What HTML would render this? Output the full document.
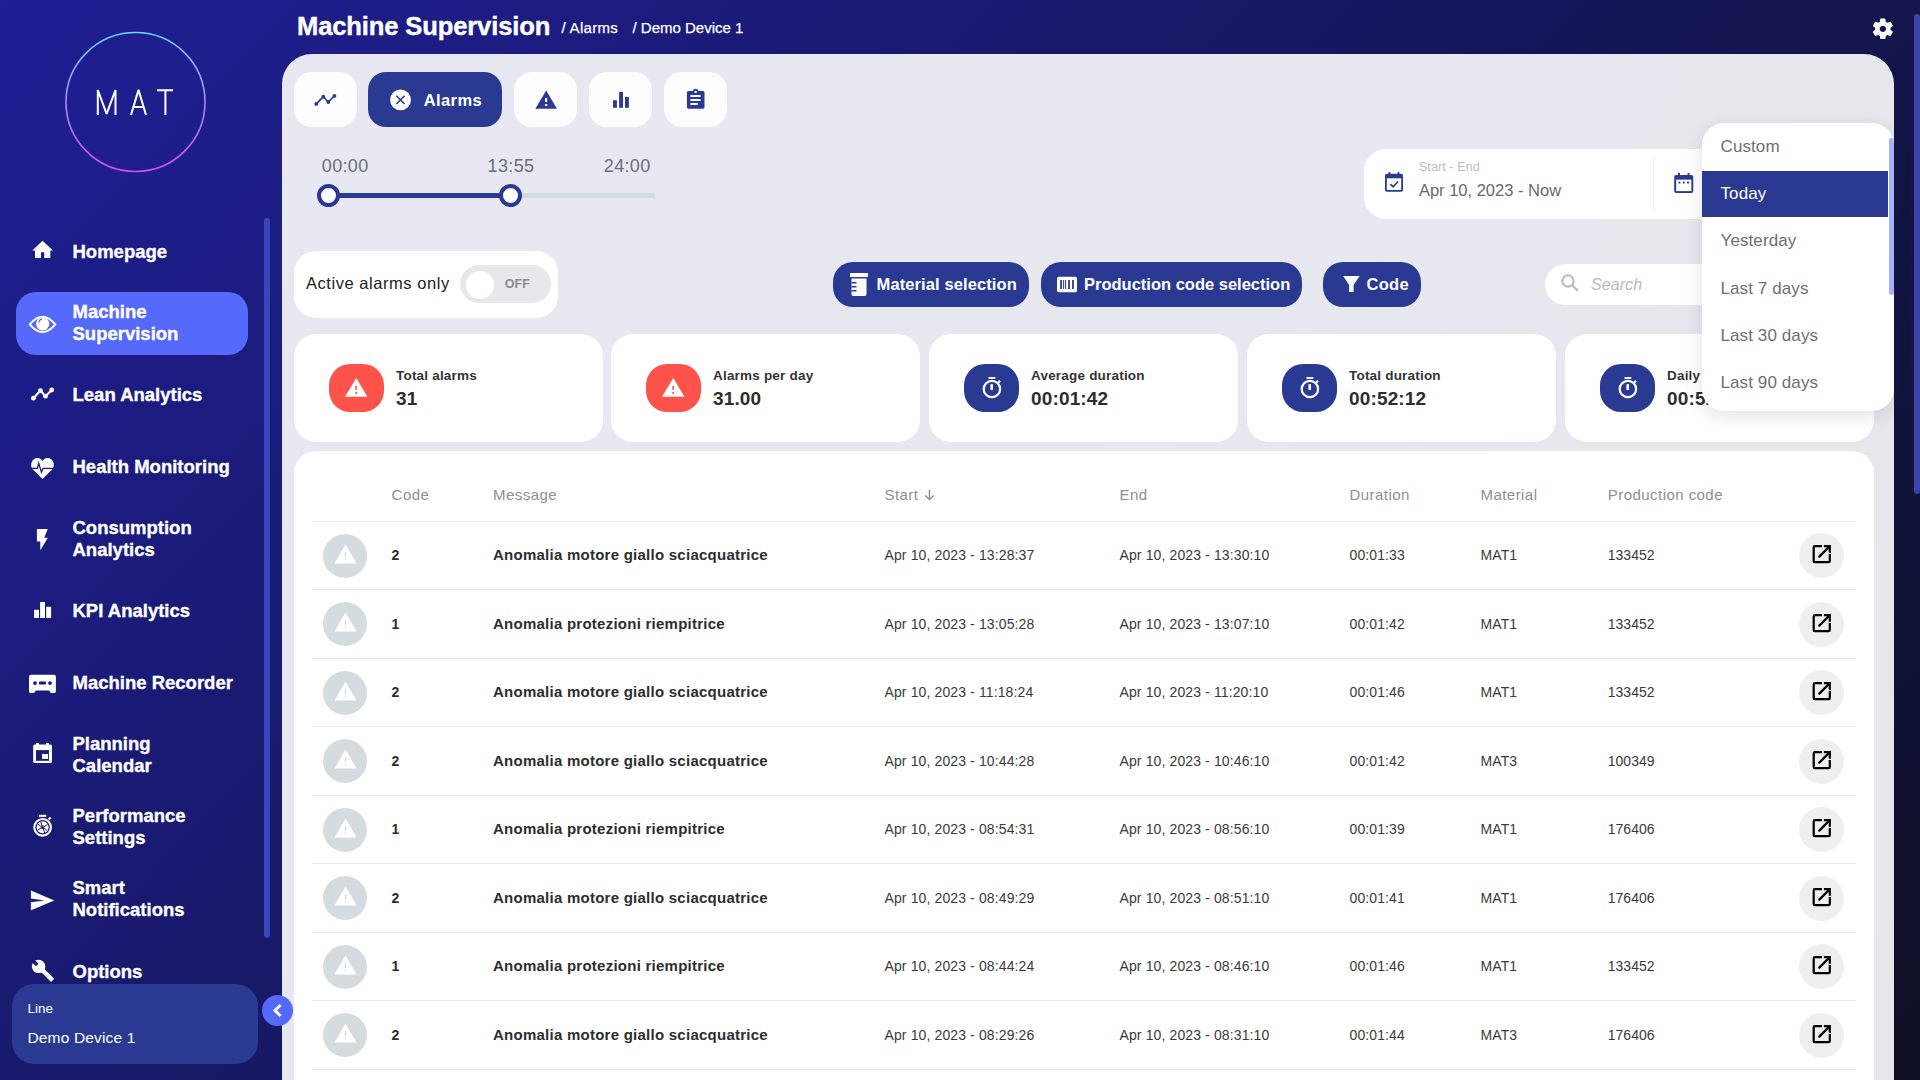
<!DOCTYPE html>
<html><head><meta charset="utf-8"><title>Machine Supervision</title>
<style>
html,body{margin:0;padding:0;width:1920px;height:1080px;overflow:hidden}
body{position:relative;font-family:"Liberation Sans", sans-serif;background:linear-gradient(134deg,#1f1f96 0%,#0d0f23 100%)}
.abs{position:absolute}
.t{position:absolute;white-space:nowrap}
svg{display:block}
</style></head><body>
<svg class="abs" style="left:60px;top:27px" width="152" height="152" viewBox="0 0 152 152">
<defs><linearGradient id="lg" x1="0" y1="0" x2="0" y2="1"><stop offset="0" stop-color="#6fd6ff"/><stop offset="0.5" stop-color="#a78bf5"/><stop offset="1" stop-color="#d94af0"/></linearGradient></defs>
<circle cx="75.5" cy="75" r="69.5" fill="none" stroke="url(#lg)" stroke-width="1.6"/>
<g fill="none" stroke="#fff" stroke-width="2" stroke-linejoin="bevel">
<path d="M37.8 88 V63 L46.6 86.8 L55.5 63 V88"/>
<path d="M71 88 L78.5 62.9 L86 88 M73.2 79.9 H83.6"/>
<path d="M97.1 63.3 H113.1 M105.4 63.3 V88"/>
</g></svg>
<div class="abs" style="left:264px;top:218px;width:6px;height:720px;border-radius:3px;background:#3845bb"></div>
<div class="abs" style="left:16px;top:292px;width:232px;height:63px;border-radius:20px;background:#5569fb"></div>
<div class="t" style="left:72.5px;top:242.74px;font-size:18.5px;line-height:18.5px;font-weight:700;color:#fff;letter-spacing:0px;-webkit-text-stroke:0.35px #fff;">Homepage</div>
<div class="t" style="left:72.5px;top:303.34px;font-size:18.5px;line-height:18.5px;font-weight:700;color:#fff;letter-spacing:0px;-webkit-text-stroke:0.35px #fff;">Machine</div><div class="t" style="left:72.5px;top:325.34px;font-size:18.5px;line-height:18.5px;font-weight:700;color:#fff;letter-spacing:0px;-webkit-text-stroke:0.35px #fff;">Supervision</div>
<div class="t" style="left:72.5px;top:386.34px;font-size:18.5px;line-height:18.5px;font-weight:700;color:#fff;letter-spacing:0px;-webkit-text-stroke:0.35px #fff;">Lean Analytics</div>
<div class="t" style="left:72.5px;top:458.34px;font-size:18.5px;line-height:18.5px;font-weight:700;color:#fff;letter-spacing:0px;-webkit-text-stroke:0.35px #fff;">Health Monitoring</div>
<div class="t" style="left:72.5px;top:519.34px;font-size:18.5px;line-height:18.5px;font-weight:700;color:#fff;letter-spacing:0px;-webkit-text-stroke:0.35px #fff;">Consumption</div><div class="t" style="left:72.5px;top:541.34px;font-size:18.5px;line-height:18.5px;font-weight:700;color:#fff;letter-spacing:0px;-webkit-text-stroke:0.35px #fff;">Analytics</div>
<div class="t" style="left:72.5px;top:602.34px;font-size:18.5px;line-height:18.5px;font-weight:700;color:#fff;letter-spacing:0px;-webkit-text-stroke:0.35px #fff;">KPI Analytics</div>
<div class="t" style="left:72.5px;top:674.34px;font-size:18.5px;line-height:18.5px;font-weight:700;color:#fff;letter-spacing:0px;-webkit-text-stroke:0.35px #fff;">Machine Recorder</div>
<div class="t" style="left:72.5px;top:735.34px;font-size:18.5px;line-height:18.5px;font-weight:700;color:#fff;letter-spacing:0px;-webkit-text-stroke:0.35px #fff;">Planning</div><div class="t" style="left:72.5px;top:757.34px;font-size:18.5px;line-height:18.5px;font-weight:700;color:#fff;letter-spacing:0px;-webkit-text-stroke:0.35px #fff;">Calendar</div>
<div class="t" style="left:72.5px;top:807.34px;font-size:18.5px;line-height:18.5px;font-weight:700;color:#fff;letter-spacing:0px;-webkit-text-stroke:0.35px #fff;">Performance</div><div class="t" style="left:72.5px;top:829.34px;font-size:18.5px;line-height:18.5px;font-weight:700;color:#fff;letter-spacing:0px;-webkit-text-stroke:0.35px #fff;">Settings</div>
<div class="t" style="left:72.5px;top:879.34px;font-size:18.5px;line-height:18.5px;font-weight:700;color:#fff;letter-spacing:0px;-webkit-text-stroke:0.35px #fff;">Smart</div><div class="t" style="left:72.5px;top:901.34px;font-size:18.5px;line-height:18.5px;font-weight:700;color:#fff;letter-spacing:0px;-webkit-text-stroke:0.35px #fff;">Notifications</div>
<div class="t" style="left:72.5px;top:962.94px;font-size:18.5px;line-height:18.5px;font-weight:700;color:#fff;letter-spacing:0px;-webkit-text-stroke:0.35px #fff;">Options</div>
<svg class="abs" style="left:0;top:0" width="282" height="1080" viewBox="0 0 282 1080">
<defs><mask id="cut" maskUnits="userSpaceOnUse" x="0" y="0" width="282" height="1080">
<rect x="0" y="0" width="282" height="1080" fill="#fff"/>
<path fill="none" stroke="#000" stroke-width="1.3" d="M30 468.4 H37.4 L38.7 463.2 L41.4 472.2 L43.1 468.4 H55"/>
<g fill="#000"><circle cx="35" cy="683.1" r="1.9"/><rect x="39" y="681.6" width="6.9" height="3" rx="0.6"/><circle cx="50" cy="683.1" r="1.9"/></g>
<rect x="36" y="750.1" width="12.9" height="10.7" fill="#000"/>
<g stroke="#000" stroke-width="1" fill="none"><path d="M40.6 821.6 L43.2 829"/><path d="M47.6 824.3 L41.2 828.9"/><path d="M47.3 830.8 L41.4 825.6"/><path d="M44.8 833 L42.2 825.6"/><path d="M37.6 830.3 L44 825.7"/><path d="M37.8 823.8 L43.8 829"/></g>
<path d="M31 958.8 L37.3 965.1" stroke="#000" stroke-width="3.6"/>
</mask></defs>
<path fill="#fff" d="M32.3 250.4 L42.5 240.7 L53 250.4 H50.3 V258.1 H44.2 V252.2 H41 V258.1 H35 V250.4 Z"/>
<path fill="none" stroke="#fff" stroke-width="2" d="M29.8 324.4 Q42.5 309 55.3 324.4 Q42.5 339.8 29.8 324.4 Z"/>
<circle cx="42.7" cy="323.8" r="6.6" fill="#fff"/>
<path fill="none" stroke="#5569fb" stroke-width="1.2" d="M38.8 322.6 Q39.3 319.6 42 318.9"/>
<g fill="#fff"><circle cx="33.4" cy="398.2" r="2.4"/><circle cx="40.4" cy="390.6" r="2.4"/><circle cx="45.5" cy="396.2" r="2.4"/><circle cx="51.7" cy="390" r="2.4"/></g>
<path fill="none" stroke="#fff" stroke-width="2" d="M33.4 398.2 L40.4 390.6 L45.5 396.2 L51.7 390"/>
<g mask="url(#cut)">
<path fill="#fff" d="M42.5 478.9 L33.2 469.8 C30.3 466.9 30.6 461.8 33.6 459.4 C36.6 457 40.6 457.6 42.5 460.9 C44.4 457.6 48.4 457 51.4 459.4 C54.4 461.8 54.7 466.9 51.8 469.8 Z"/>
<path fill="#fff" d="M31 674.8 H54 Q55.9 674.8 55.9 676.7 V691.2 Q55.9 693.1 54 693.1 H51.6 Q50.6 693.1 50.1 692 L49.3 690.5 H35.7 L34.9 692 Q34.4 693.1 33.4 693.1 H31 Q29 693.1 29 691.2 V676.7 Q29 674.8 31 674.8 Z"/>
<g fill="#fff"><rect x="33.2" y="744.6" width="18.8" height="18.5" rx="1.6"/><rect x="36" y="743" width="3" height="3" rx="0.8"/><rect x="45.9" y="743" width="3" height="3" rx="0.8"/></g>
<circle cx="42.6" cy="827.3" r="6" fill="#fff"/>
<circle cx="38.6" cy="966.4" r="6.7" fill="#fff"/>
</g>
<path fill="#fff" d="M36.9 528.9 H47.8 L44.2 537.8 H47.9 L40.3 550.2 V541.6 H36.9 Z"/>
<g fill="#fff"><rect x="34.1" y="609.8" width="4.9" height="8.2"/><rect x="40.1" y="602" width="4.9" height="16"/><rect x="46.2" y="606.8" width="4.9" height="11.2"/></g>
<rect x="42" y="754" width="6" height="4.9" fill="#fff"/>
<circle cx="42.6" cy="827.3" r="8.3" fill="none" stroke="#fff" stroke-width="2.1"/>
<rect x="39" y="814.8" width="7.2" height="2.1" fill="#fff"/>
<path d="M48.7 819.5 L50.6 817.6" stroke="#fff" stroke-width="2.2"/>
<path fill="#fff" d="M30.9 890.5 L54.3 900.4 L30.9 910.2 V902.3 L44.5 900.4 L30.9 898.5 Z"/>
<path d="M40 967.8 L52.6 980.4" stroke="#fff" stroke-width="4.4"/>
</svg>
<div class="abs" style="left:12px;top:984px;width:246px;height:80px;border-radius:22px;background:#2a3a92"></div>
<div class="t" style="left:27.5px;top:1002.07px;font-size:13.5px;line-height:13.5px;font-weight:400;color:#fff;letter-spacing:0px;">Line</div>
<div class="t" style="left:27.5px;top:1029.88px;font-size:15.5px;line-height:15.5px;font-weight:400;color:#fff;letter-spacing:0.15px;">Demo Device 1</div>
<div class="t" style="left:297px;top:13.93px;font-size:25.6px;line-height:25.6px;font-weight:700;color:#fff;letter-spacing:-0.15px;-webkit-text-stroke:0.4px #fff;">Machine Supervision</div>
<div class="t" style="left:561.5px;top:20.30px;font-size:15px;line-height:15px;font-weight:400;color:#fff;letter-spacing:0.3px;-webkit-text-stroke:0.25px #fff;">/ Alarms</div>
<div class="t" style="left:632.5px;top:20.30px;font-size:15px;line-height:15px;font-weight:400;color:#fff;letter-spacing:0px;-webkit-text-stroke:0.25px #fff;">/ Demo Device 1</div>
<svg class="abs" style="left:1869.5px;top:15.9px" width="25.7" height="25.7" viewBox="0 0 24 24"><path fill="#fff" d="M19.14 12.94c.04-.3.06-.61.06-.94 0-.32-.02-.64-.07-.94l2.03-1.58a.49.49 0 0 0 .12-.61l-1.92-3.32a.488.488 0 0 0-.59-.22l-2.39.96c-.5-.38-1.03-.7-1.62-.94l-.36-2.54a.484.484 0 0 0-.48-.41h-3.84c-.24 0-.43.17-.47.41l-.36 2.54c-.59.24-1.13.57-1.62.94l-2.39-.96c-.22-.08-.47 0-.59.22L2.74 8.87c-.12.21-.08.47.12.61l2.03 1.58c-.05.3-.09.63-.09.94s.02.64.07.94l-2.03 1.58a.49.49 0 0 0-.12.61l1.92 3.32c.12.22.37.29.59.22l2.39-.96c.5.38 1.03.7 1.62.94l.36 2.54c.05.24.24.41.48.41h3.84c.24 0 .44-.17.47-.41l.36-2.54c.59-.24 1.13-.56 1.62-.94l2.39.96c.22.08.47 0 .59-.22l1.92-3.32c.12-.22.07-.47-.12-.61l-2.01-1.58zM12 15c-1.65 0-3-1.35-3-3s1.35-3 3-3 3 1.35 3 3-1.35 3-3 3z"/></svg>
<div class="abs" style="left:1914px;top:14px;width:6px;height:480px;border-radius:3px;background:#3a44a8"></div>
<div class="abs" style="left:282px;top:54px;width:1612px;height:1100px;border-radius:30px 30px 0 0;background:linear-gradient(115deg,#e8e8f2 0%,#e8e8f1 45%,#e5e7ea 100%)"></div>
<div class="abs" style="left:262px;top:995px;width:31px;height:31px;border-radius:50%;background:#5569fb"><svg width="31" height="31" viewBox="0 0 31 31"><path d="M18.6 10 L13 15.5 L18.6 21" stroke="#fff" stroke-width="2.9" fill="none"/></svg></div>
<div class="abs" style="left:294px;top:72px;width:63px;height:55px;border-radius:18px;background:#fdfdfe"></div>
<div class="abs" style="left:368px;top:72px;width:134px;height:55px;border-radius:18px;background:#2a3a93"></div>
<div class="abs" style="left:514px;top:72px;width:63px;height:55px;border-radius:18px;background:#fdfdfe"></div>
<div class="abs" style="left:589px;top:72px;width:63px;height:55px;border-radius:18px;background:#fdfdfe"></div>
<div class="abs" style="left:664px;top:72px;width:63px;height:55px;border-radius:18px;background:#fdfdfe"></div>
<svg class="abs" style="left:280px;top:60px" width="460" height="70" viewBox="280 60 460 70">
<g fill="#2a3a93"><circle cx="316.3" cy="103.9" r="1.9"/><circle cx="323.3" cy="96.7" r="1.9"/><circle cx="328.3" cy="102" r="1.9"/><circle cx="334.4" cy="95.9" r="1.9"/></g>
<path d="M316.3 103.9 L323.3 96.7 L328.3 102 L334.4 95.9" stroke="#2a3a93" stroke-width="1.6" fill="none"/>
<circle cx="400.5" cy="99.9" r="10.4" fill="#fff"/>
<path d="M396.4 95.8 L404.6 104 M404.6 95.8 L396.4 104" stroke="#2a3a93" stroke-width="1.6"/>
<path fill="#2a3a93" d="M546.2 90.6 L557 108.7 H535.3 Z"/>
<rect x="545.1" y="98" width="2.1" height="3.9" fill="#fff"/><rect x="545.1" y="104" width="2.1" height="2" fill="#fff"/>
<g fill="#2a3a93"><rect x="613" y="100.2" width="3.9" height="7.6"/><rect x="619.1" y="92" width="3.9" height="15.8"/><rect x="625" y="97" width="3.9" height="10.8"/></g>
<path fill="#2a3a93" d="M688.5 90.9 H692.8 A2.9 2.9 0 0 1 698.4 90.9 H702.9 A1.6 1.6 0 0 1 704.5 92.5 V107.1 A1.6 1.6 0 0 1 702.9 108.7 H688.5 A1.6 1.6 0 0 1 686.9 107.1 V92.5 A1.6 1.6 0 0 1 688.5 90.9 Z"/>
<circle cx="695.6" cy="91.9" r="1.2" fill="#fff"/>
<g stroke="#fff" stroke-width="2" stroke-linecap="round"><path d="M691.2 95.9 H699.9"/><path d="M691.2 100 H699.9"/><path d="M691.2 104.1 H697"/></g>
</svg>
<div class="t" style="left:423.7px;top:91.53px;font-size:16.5px;line-height:16.5px;font-weight:700;color:#fff;letter-spacing:0.4px;">Alarms</div>
<div class="t" style="left:321.8px;top:157.46px;font-size:18px;line-height:18px;font-weight:400;color:#6b6f7b;letter-spacing:0.35px;">00:00</div>
<div class="t" style="left:487.6px;top:157.46px;font-size:18px;line-height:18px;font-weight:400;color:#6b6f7b;letter-spacing:0.35px;">13:55</div>
<div class="t" style="left:603.8px;top:157.46px;font-size:18px;line-height:18px;font-weight:400;color:#6b6f7b;letter-spacing:0.35px;">24:00</div>
<div class="abs" style="left:328px;top:192.8px;width:327px;height:5px;border-radius:3px;background:#d5dadc"></div>
<div class="abs" style="left:328px;top:192.8px;width:183px;height:5px;background:#2a3a93"></div>
<div class="abs" style="left:316.8px;top:184px;width:15px;height:15px;border:4.2px solid #2a3a93;border-radius:50%;background:#fff"></div>
<div class="abs" style="left:499.4px;top:184px;width:15px;height:15px;border:4.2px solid #2a3a93;border-radius:50%;background:#fff"></div>
<div class="abs" style="left:1363.5px;top:149px;width:520px;height:69.5px;border-radius:22px;background:#fff"></div>
<svg class="abs" style="left:1385px;top:172px" width="18" height="19.8" viewBox="0 0 20 22"><path fill="#2b3990" d="M4 0 H6 V2 H14 V0 H16 V2 H18 A2 2 0 0 1 20 4 V20 A2 2 0 0 1 18 22 H2 A2 2 0 0 1 0 20 V4 A2 2 0 0 1 2 2 H4Z"/><rect x="2" y="7" width="16" height="13" fill="#fff"/><path d="M6 13.5 L9 16.5 L14.5 10.5" stroke="#2b3990" stroke-width="1.8" fill="none"/></svg>
<div class="t" style="left:1418.9px;top:160.62px;font-size:12.5px;line-height:12.5px;font-weight:400;color:#b8bdc5;letter-spacing:0.1px;">Start - End</div>
<div class="t" style="left:1418.9px;top:182.03px;font-size:16.5px;line-height:16.5px;font-weight:400;color:#666a72;letter-spacing:0px;">Apr 10, 2023 - Now</div>
<div class="abs" style="left:1652.5px;top:157.5px;width:1px;height:53px;background:#eeeeee"></div>
<svg class="abs" style="left:1674px;top:172.5px" width="19.5" height="20" viewBox="0 0 20 21"><path fill="#2b3990" d="M4 0 H6 V2 H14 V0 H16 V2 H18 A2 2 0 0 1 20 4 V19 A2 2 0 0 1 18 21 H2 A2 2 0 0 1 0 19 V4 A2 2 0 0 1 2 2 H4Z"/><rect x="2" y="7" width="16" height="12" fill="#fff"/><g fill="#2b3990"><rect x="4.5" y="9" width="2" height="2"/><rect x="9" y="9" width="2" height="2"/><rect x="13.5" y="9" width="2" height="2"/></g></svg>
<div class="abs" style="left:294px;top:251px;width:264px;height:67px;border-radius:22px;background:#fff"></div>
<div class="t" style="left:306px;top:275.03px;font-size:16.5px;line-height:16.5px;font-weight:400;color:#222;letter-spacing:0.55px;">Active alarms only</div>
<div class="abs" style="left:460px;top:265.4px;width:91px;height:38px;border-radius:19px;background:#e6e9ea"></div>
<div class="abs" style="left:466px;top:270.5px;width:28px;height:28px;border-radius:50%;background:#fff"></div>
<div class="t" style="left:504.8px;top:278.42px;font-size:12.5px;line-height:12.5px;font-weight:700;color:#8a8d90;letter-spacing:0px;">OFF</div>
<div class="abs" style="left:833px;top:262px;width:196px;height:45px;border-radius:20px;background:#2a3a93"></div>
<div class="abs" style="left:1041px;top:262px;width:261px;height:45px;border-radius:20px;background:#2a3a93"></div>
<div class="abs" style="left:1323px;top:262px;width:98px;height:45px;border-radius:20px;background:#2a3a93"></div>
<svg class="abs" style="left:850px;top:273px" width="18" height="23" viewBox="0 0 18 23"><g fill="#fff"><rect x="0" y="0" width="18" height="4" rx="0.5"/><path d="M1.5 5.5 H16.5 V21 A2 2 0 0 1 14.5 23 H3.5 A2 2 0 0 1 1.5 21 Z"/></g><g fill="#2b3990"><rect x="1.5" y="9" width="5" height="1.5"/><rect x="1.5" y="13" width="5" height="1.5"/><rect x="1.5" y="17" width="5" height="1.5"/></g></svg>
<div class="t" style="left:876.6px;top:276.23px;font-size:16.5px;line-height:16.5px;font-weight:600;color:#fff;letter-spacing:0.1px;">Material selection</div>
<svg class="abs" style="left:1050px;top:270px" width="35" height="30" viewBox="1050 270 35 30"><rect x="1057" y="276.7" width="20" height="15.5" rx="1.8" fill="#fff"/><g fill="#2a3a93"><rect x="1060.2" y="280" width="1.8" height="9"/><rect x="1063.1" y="280" width="1" height="9"/><rect x="1065.1" y="280" width="1" height="9"/><rect x="1068.1" y="280" width="1.8" height="9"/><rect x="1072.1" y="280" width="1.8" height="9"/></g></svg>
<div class="t" style="left:1084px;top:276.23px;font-size:16.5px;line-height:16.5px;font-weight:600;color:#fff;letter-spacing:0px;">Production code selection</div>
<svg class="abs" style="left:1342.5px;top:276px" width="17" height="16.5" viewBox="0 0 17 16.5"><path fill="#fff" d="M0.2 0 H16.7 L10.6 9 V16 H6.1 V9 Z"/></svg>
<div class="t" style="left:1366.5px;top:276.23px;font-size:16.5px;line-height:16.5px;font-weight:600;color:#fff;letter-spacing:0.3px;">Code</div>
<div class="abs" style="left:1545px;top:264px;width:330px;height:41px;border-radius:21px;background:#fff"></div>
<svg class="abs" style="left:1561px;top:273.5px" width="18.5" height="18" viewBox="0 0 18.5 18"><circle cx="7" cy="7" r="5.6" stroke="#b5bec6" stroke-width="2.2" fill="none"/><path d="M11 11 L17 17" stroke="#b5bec6" stroke-width="2.4"/></svg>
<div class="t" style="left:1590.9px;top:277.46px;font-size:16px;line-height:16px;font-weight:400;color:#b5bec6;letter-spacing:0.1px;font-style:italic;">Search</div>
<div class="abs" style="left:294px;top:334px;width:308.5px;height:108px;border-radius:22px;background:#fff"></div>
<div class="abs" style="left:329px;top:364px;width:55px;height:48px;border-radius:21px;background:#fe534a"></div>
<svg class="abs" style="left:294px;top:334px" width="120" height="100" viewBox="294 334 120 100"><path fill="#fff" d="M356.3 377.9 L367.4 396.8 H345 Z"/><rect x="355.3" y="386" width="1.7" height="3.7" fill="#fe534a"/><rect x="355.3" y="391.9" width="1.7" height="2" fill="#fe534a"/></svg>
<div class="t" style="left:396px;top:368.82px;font-size:13.5px;line-height:13.5px;font-weight:700;color:#333;letter-spacing:0.2px;">Total alarms</div>
<div class="t" style="left:396px;top:388.62px;font-size:19px;line-height:19px;font-weight:700;color:#2d2d2d;letter-spacing:0.15px;">31</div>
<div class="abs" style="left:611px;top:334px;width:308.5px;height:108px;border-radius:22px;background:#fff"></div>
<div class="abs" style="left:646px;top:364px;width:55px;height:48px;border-radius:21px;background:#fe534a"></div>
<svg class="abs" style="left:611px;top:334px" width="120" height="100" viewBox="294 334 120 100"><path fill="#fff" d="M356.3 377.9 L367.4 396.8 H345 Z"/><rect x="355.3" y="386" width="1.7" height="3.7" fill="#fe534a"/><rect x="355.3" y="391.9" width="1.7" height="2" fill="#fe534a"/></svg>
<div class="t" style="left:713px;top:368.82px;font-size:13.5px;line-height:13.5px;font-weight:700;color:#333;letter-spacing:0.2px;">Alarms per day</div>
<div class="t" style="left:713px;top:388.62px;font-size:19px;line-height:19px;font-weight:700;color:#2d2d2d;letter-spacing:0.15px;">31.00</div>
<div class="abs" style="left:929px;top:334px;width:308.5px;height:108px;border-radius:22px;background:#fff"></div>
<div class="abs" style="left:964px;top:364px;width:55px;height:48px;border-radius:21px;background:#2a3a93"></div>
<svg class="abs" style="left:929px;top:334px" width="120" height="100" viewBox="929 334 120 100"><circle cx="991.9" cy="389" r="8.2" fill="none" stroke="#fff" stroke-width="2.2"/><rect x="988.5" y="377" width="6.8" height="1.9" fill="#fff"/><rect x="990.4" y="384.2" width="2.6" height="5.7" fill="#fff"/><path d="M998.2 382.6 L1000 380.8" stroke="#fff" stroke-width="2.2"/></svg>
<div class="t" style="left:1031px;top:368.82px;font-size:13.5px;line-height:13.5px;font-weight:700;color:#333;letter-spacing:0.2px;">Average duration</div>
<div class="t" style="left:1031px;top:388.62px;font-size:19px;line-height:19px;font-weight:700;color:#2d2d2d;letter-spacing:0.15px;">00:01:42</div>
<div class="abs" style="left:1247px;top:334px;width:308.5px;height:108px;border-radius:22px;background:#fff"></div>
<div class="abs" style="left:1282px;top:364px;width:55px;height:48px;border-radius:21px;background:#2a3a93"></div>
<svg class="abs" style="left:1247px;top:334px" width="120" height="100" viewBox="929 334 120 100"><circle cx="991.9" cy="389" r="8.2" fill="none" stroke="#fff" stroke-width="2.2"/><rect x="988.5" y="377" width="6.8" height="1.9" fill="#fff"/><rect x="990.4" y="384.2" width="2.6" height="5.7" fill="#fff"/><path d="M998.2 382.6 L1000 380.8" stroke="#fff" stroke-width="2.2"/></svg>
<div class="t" style="left:1349px;top:368.82px;font-size:13.5px;line-height:13.5px;font-weight:700;color:#333;letter-spacing:0.2px;">Total duration</div>
<div class="t" style="left:1349px;top:388.62px;font-size:19px;line-height:19px;font-weight:700;color:#2d2d2d;letter-spacing:0.15px;">00:52:12</div>
<div class="abs" style="left:1565px;top:334px;width:308.5px;height:108px;border-radius:22px;background:#fff"></div>
<div class="abs" style="left:1600px;top:364px;width:55px;height:48px;border-radius:21px;background:#2a3a93"></div>
<svg class="abs" style="left:1565px;top:334px" width="120" height="100" viewBox="929 334 120 100"><circle cx="991.9" cy="389" r="8.2" fill="none" stroke="#fff" stroke-width="2.2"/><rect x="988.5" y="377" width="6.8" height="1.9" fill="#fff"/><rect x="990.4" y="384.2" width="2.6" height="5.7" fill="#fff"/><path d="M998.2 382.6 L1000 380.8" stroke="#fff" stroke-width="2.2"/></svg>
<div class="t" style="left:1667px;top:368.82px;font-size:13.5px;line-height:13.5px;font-weight:700;color:#333;letter-spacing:0.2px;">Daily duration</div>
<div class="t" style="left:1667px;top:388.62px;font-size:19px;line-height:19px;font-weight:700;color:#2d2d2d;letter-spacing:0.15px;">00:52:12</div>
<div class="abs" style="left:294px;top:451px;width:1580px;height:700px;border-radius:22px;background:#fff"></div>
<div class="t" style="left:391.6px;top:487.30px;font-size:15px;line-height:15px;font-weight:400;color:#8d8f92;letter-spacing:0.45px;">Code</div>
<div class="t" style="left:493px;top:487.30px;font-size:15px;line-height:15px;font-weight:400;color:#8d8f92;letter-spacing:0.45px;">Message</div>
<div class="t" style="left:884.5px;top:487.30px;font-size:15px;line-height:15px;font-weight:400;color:#8d8f92;letter-spacing:0.45px;">Start</div>
<div class="t" style="left:1119.5px;top:487.30px;font-size:15px;line-height:15px;font-weight:400;color:#8d8f92;letter-spacing:0.45px;">End</div>
<div class="t" style="left:1349.5px;top:487.30px;font-size:15px;line-height:15px;font-weight:400;color:#8d8f92;letter-spacing:0.45px;">Duration</div>
<div class="t" style="left:1480.5px;top:487.30px;font-size:15px;line-height:15px;font-weight:400;color:#8d8f92;letter-spacing:0.45px;">Material</div>
<div class="t" style="left:1607.8px;top:487.30px;font-size:15px;line-height:15px;font-weight:400;color:#8d8f92;letter-spacing:0.45px;">Production code</div>
<svg class="abs" style="left:923px;top:488px" width="13" height="13" viewBox="0 0 13 13"><path d="M6.5 2 V11.5 M2.3 7.5 L6.5 11.5 L10.7 7.5" stroke="#8d8f92" stroke-width="1.4" fill="none"/></svg>
<div class="abs" style="left:312px;top:520.75px;width:1544px;height:1px;background:#e6e9eb"></div>
<div class="abs" style="left:312px;top:589.25px;width:1544px;height:1px;background:#e6e9eb"></div>
<div class="abs" style="left:312px;top:657.75px;width:1544px;height:1px;background:#e6e9eb"></div>
<div class="abs" style="left:312px;top:726.25px;width:1544px;height:1px;background:#e6e9eb"></div>
<div class="abs" style="left:312px;top:794.75px;width:1544px;height:1px;background:#e6e9eb"></div>
<div class="abs" style="left:312px;top:863.25px;width:1544px;height:1px;background:#e6e9eb"></div>
<div class="abs" style="left:312px;top:931.75px;width:1544px;height:1px;background:#e6e9eb"></div>
<div class="abs" style="left:312px;top:1000.25px;width:1544px;height:1px;background:#e6e9eb"></div>
<div class="abs" style="left:312px;top:1068.75px;width:1544px;height:1px;background:#e6e9eb"></div>
<div class="abs" style="left:323px;top:533.50px;width:44px;height:44px;border-radius:50%;background:#d4dce0"></div>
<svg class="abs" style="left:334px;top:543.50px" width="23" height="20" viewBox="0 0 23 20"><path fill="#fff" d="M11.5 0.5 L22.5 19.5 H0.5 Z"/><rect x="10.8" y="8" width="1.4" height="5" fill="#d4dce0"/><rect x="10.8" y="14.5" width="1.4" height="1.4" fill="#d4dce0"/></svg>
<div class="t" style="left:391.6px;top:548.15px;font-size:14px;line-height:14px;font-weight:700;color:#2d2d2d;letter-spacing:0px;">2</div>
<div class="t" style="left:493px;top:547.30px;font-size:15px;line-height:15px;font-weight:700;color:#2d2d2d;letter-spacing:0.25px;">Anomalia motore giallo sciacquatrice</div>
<div class="t" style="left:884.5px;top:548.15px;font-size:14px;line-height:14px;font-weight:400;color:#3a3a3a;letter-spacing:0.12px;">Apr 10, 2023 - 13:28:37</div>
<div class="t" style="left:1119.5px;top:548.15px;font-size:14px;line-height:14px;font-weight:400;color:#3a3a3a;letter-spacing:0.12px;">Apr 10, 2023 - 13:30:10</div>
<div class="t" style="left:1349.5px;top:548.15px;font-size:14px;line-height:14px;font-weight:400;color:#3a3a3a;letter-spacing:0.1px;">00:01:33</div>
<div class="t" style="left:1480.5px;top:548.15px;font-size:14px;line-height:14px;font-weight:400;color:#3a3a3a;letter-spacing:0.1px;">MAT1</div>
<div class="t" style="left:1607.8px;top:548.15px;font-size:14px;line-height:14px;font-weight:400;color:#3a3a3a;letter-spacing:0px;">133452</div>
<div class="abs" style="left:1799px;top:533.00px;width:45px;height:45px;border-radius:50%;background:#efefef"></div>
<svg class="abs" style="left:1800px;top:533.00px" width="45" height="45" viewBox="1800 532.9 45 45"><g fill="none" stroke="#000" stroke-width="2.2"><path d="M1822 546 H1815 Q1813.7 546 1813.7 547.3 V560.8 Q1813.7 562.1 1815 562.1 H1828.5 Q1829.8 562.1 1829.8 560.8 V554"/><path d="M1823.9 546 H1829.8 V552.6"/><path d="M1819.3 556.5 L1829 546.8" stroke-linecap="round"/></g></svg>
<div class="abs" style="left:323px;top:602.00px;width:44px;height:44px;border-radius:50%;background:#d4dce0"></div>
<svg class="abs" style="left:334px;top:612.00px" width="23" height="20" viewBox="0 0 23 20"><path fill="#fff" d="M11.5 0.5 L22.5 19.5 H0.5 Z"/><rect x="10.8" y="8" width="1.4" height="5" fill="#d4dce0"/><rect x="10.8" y="14.5" width="1.4" height="1.4" fill="#d4dce0"/></svg>
<div class="t" style="left:391.6px;top:616.65px;font-size:14px;line-height:14px;font-weight:700;color:#2d2d2d;letter-spacing:0px;">1</div>
<div class="t" style="left:493px;top:615.80px;font-size:15px;line-height:15px;font-weight:700;color:#2d2d2d;letter-spacing:0.25px;">Anomalia protezioni riempitrice</div>
<div class="t" style="left:884.5px;top:616.65px;font-size:14px;line-height:14px;font-weight:400;color:#3a3a3a;letter-spacing:0.12px;">Apr 10, 2023 - 13:05:28</div>
<div class="t" style="left:1119.5px;top:616.65px;font-size:14px;line-height:14px;font-weight:400;color:#3a3a3a;letter-spacing:0.12px;">Apr 10, 2023 - 13:07:10</div>
<div class="t" style="left:1349.5px;top:616.65px;font-size:14px;line-height:14px;font-weight:400;color:#3a3a3a;letter-spacing:0.1px;">00:01:42</div>
<div class="t" style="left:1480.5px;top:616.65px;font-size:14px;line-height:14px;font-weight:400;color:#3a3a3a;letter-spacing:0.1px;">MAT1</div>
<div class="t" style="left:1607.8px;top:616.65px;font-size:14px;line-height:14px;font-weight:400;color:#3a3a3a;letter-spacing:0px;">133452</div>
<div class="abs" style="left:1799px;top:601.50px;width:45px;height:45px;border-radius:50%;background:#efefef"></div>
<svg class="abs" style="left:1800px;top:601.50px" width="45" height="45" viewBox="1800 532.9 45 45"><g fill="none" stroke="#000" stroke-width="2.2"><path d="M1822 546 H1815 Q1813.7 546 1813.7 547.3 V560.8 Q1813.7 562.1 1815 562.1 H1828.5 Q1829.8 562.1 1829.8 560.8 V554"/><path d="M1823.9 546 H1829.8 V552.6"/><path d="M1819.3 556.5 L1829 546.8" stroke-linecap="round"/></g></svg>
<div class="abs" style="left:323px;top:670.50px;width:44px;height:44px;border-radius:50%;background:#d4dce0"></div>
<svg class="abs" style="left:334px;top:680.50px" width="23" height="20" viewBox="0 0 23 20"><path fill="#fff" d="M11.5 0.5 L22.5 19.5 H0.5 Z"/><rect x="10.8" y="8" width="1.4" height="5" fill="#d4dce0"/><rect x="10.8" y="14.5" width="1.4" height="1.4" fill="#d4dce0"/></svg>
<div class="t" style="left:391.6px;top:685.15px;font-size:14px;line-height:14px;font-weight:700;color:#2d2d2d;letter-spacing:0px;">2</div>
<div class="t" style="left:493px;top:684.30px;font-size:15px;line-height:15px;font-weight:700;color:#2d2d2d;letter-spacing:0.25px;">Anomalia motore giallo sciacquatrice</div>
<div class="t" style="left:884.5px;top:685.15px;font-size:14px;line-height:14px;font-weight:400;color:#3a3a3a;letter-spacing:0.12px;">Apr 10, 2023 - 11:18:24</div>
<div class="t" style="left:1119.5px;top:685.15px;font-size:14px;line-height:14px;font-weight:400;color:#3a3a3a;letter-spacing:0.12px;">Apr 10, 2023 - 11:20:10</div>
<div class="t" style="left:1349.5px;top:685.15px;font-size:14px;line-height:14px;font-weight:400;color:#3a3a3a;letter-spacing:0.1px;">00:01:46</div>
<div class="t" style="left:1480.5px;top:685.15px;font-size:14px;line-height:14px;font-weight:400;color:#3a3a3a;letter-spacing:0.1px;">MAT1</div>
<div class="t" style="left:1607.8px;top:685.15px;font-size:14px;line-height:14px;font-weight:400;color:#3a3a3a;letter-spacing:0px;">133452</div>
<div class="abs" style="left:1799px;top:670.00px;width:45px;height:45px;border-radius:50%;background:#efefef"></div>
<svg class="abs" style="left:1800px;top:670.00px" width="45" height="45" viewBox="1800 532.9 45 45"><g fill="none" stroke="#000" stroke-width="2.2"><path d="M1822 546 H1815 Q1813.7 546 1813.7 547.3 V560.8 Q1813.7 562.1 1815 562.1 H1828.5 Q1829.8 562.1 1829.8 560.8 V554"/><path d="M1823.9 546 H1829.8 V552.6"/><path d="M1819.3 556.5 L1829 546.8" stroke-linecap="round"/></g></svg>
<div class="abs" style="left:323px;top:739.00px;width:44px;height:44px;border-radius:50%;background:#d4dce0"></div>
<svg class="abs" style="left:334px;top:749.00px" width="23" height="20" viewBox="0 0 23 20"><path fill="#fff" d="M11.5 0.5 L22.5 19.5 H0.5 Z"/><rect x="10.8" y="8" width="1.4" height="5" fill="#d4dce0"/><rect x="10.8" y="14.5" width="1.4" height="1.4" fill="#d4dce0"/></svg>
<div class="t" style="left:391.6px;top:753.65px;font-size:14px;line-height:14px;font-weight:700;color:#2d2d2d;letter-spacing:0px;">2</div>
<div class="t" style="left:493px;top:752.80px;font-size:15px;line-height:15px;font-weight:700;color:#2d2d2d;letter-spacing:0.25px;">Anomalia motore giallo sciacquatrice</div>
<div class="t" style="left:884.5px;top:753.65px;font-size:14px;line-height:14px;font-weight:400;color:#3a3a3a;letter-spacing:0.12px;">Apr 10, 2023 - 10:44:28</div>
<div class="t" style="left:1119.5px;top:753.65px;font-size:14px;line-height:14px;font-weight:400;color:#3a3a3a;letter-spacing:0.12px;">Apr 10, 2023 - 10:46:10</div>
<div class="t" style="left:1349.5px;top:753.65px;font-size:14px;line-height:14px;font-weight:400;color:#3a3a3a;letter-spacing:0.1px;">00:01:42</div>
<div class="t" style="left:1480.5px;top:753.65px;font-size:14px;line-height:14px;font-weight:400;color:#3a3a3a;letter-spacing:0.1px;">MAT3</div>
<div class="t" style="left:1607.8px;top:753.65px;font-size:14px;line-height:14px;font-weight:400;color:#3a3a3a;letter-spacing:0px;">100349</div>
<div class="abs" style="left:1799px;top:738.50px;width:45px;height:45px;border-radius:50%;background:#efefef"></div>
<svg class="abs" style="left:1800px;top:738.50px" width="45" height="45" viewBox="1800 532.9 45 45"><g fill="none" stroke="#000" stroke-width="2.2"><path d="M1822 546 H1815 Q1813.7 546 1813.7 547.3 V560.8 Q1813.7 562.1 1815 562.1 H1828.5 Q1829.8 562.1 1829.8 560.8 V554"/><path d="M1823.9 546 H1829.8 V552.6"/><path d="M1819.3 556.5 L1829 546.8" stroke-linecap="round"/></g></svg>
<div class="abs" style="left:323px;top:807.50px;width:44px;height:44px;border-radius:50%;background:#d4dce0"></div>
<svg class="abs" style="left:334px;top:817.50px" width="23" height="20" viewBox="0 0 23 20"><path fill="#fff" d="M11.5 0.5 L22.5 19.5 H0.5 Z"/><rect x="10.8" y="8" width="1.4" height="5" fill="#d4dce0"/><rect x="10.8" y="14.5" width="1.4" height="1.4" fill="#d4dce0"/></svg>
<div class="t" style="left:391.6px;top:822.15px;font-size:14px;line-height:14px;font-weight:700;color:#2d2d2d;letter-spacing:0px;">1</div>
<div class="t" style="left:493px;top:821.30px;font-size:15px;line-height:15px;font-weight:700;color:#2d2d2d;letter-spacing:0.25px;">Anomalia protezioni riempitrice</div>
<div class="t" style="left:884.5px;top:822.15px;font-size:14px;line-height:14px;font-weight:400;color:#3a3a3a;letter-spacing:0.12px;">Apr 10, 2023 - 08:54:31</div>
<div class="t" style="left:1119.5px;top:822.15px;font-size:14px;line-height:14px;font-weight:400;color:#3a3a3a;letter-spacing:0.12px;">Apr 10, 2023 - 08:56:10</div>
<div class="t" style="left:1349.5px;top:822.15px;font-size:14px;line-height:14px;font-weight:400;color:#3a3a3a;letter-spacing:0.1px;">00:01:39</div>
<div class="t" style="left:1480.5px;top:822.15px;font-size:14px;line-height:14px;font-weight:400;color:#3a3a3a;letter-spacing:0.1px;">MAT1</div>
<div class="t" style="left:1607.8px;top:822.15px;font-size:14px;line-height:14px;font-weight:400;color:#3a3a3a;letter-spacing:0px;">176406</div>
<div class="abs" style="left:1799px;top:807.00px;width:45px;height:45px;border-radius:50%;background:#efefef"></div>
<svg class="abs" style="left:1800px;top:807.00px" width="45" height="45" viewBox="1800 532.9 45 45"><g fill="none" stroke="#000" stroke-width="2.2"><path d="M1822 546 H1815 Q1813.7 546 1813.7 547.3 V560.8 Q1813.7 562.1 1815 562.1 H1828.5 Q1829.8 562.1 1829.8 560.8 V554"/><path d="M1823.9 546 H1829.8 V552.6"/><path d="M1819.3 556.5 L1829 546.8" stroke-linecap="round"/></g></svg>
<div class="abs" style="left:323px;top:876.00px;width:44px;height:44px;border-radius:50%;background:#d4dce0"></div>
<svg class="abs" style="left:334px;top:886.00px" width="23" height="20" viewBox="0 0 23 20"><path fill="#fff" d="M11.5 0.5 L22.5 19.5 H0.5 Z"/><rect x="10.8" y="8" width="1.4" height="5" fill="#d4dce0"/><rect x="10.8" y="14.5" width="1.4" height="1.4" fill="#d4dce0"/></svg>
<div class="t" style="left:391.6px;top:890.65px;font-size:14px;line-height:14px;font-weight:700;color:#2d2d2d;letter-spacing:0px;">2</div>
<div class="t" style="left:493px;top:889.80px;font-size:15px;line-height:15px;font-weight:700;color:#2d2d2d;letter-spacing:0.25px;">Anomalia motore giallo sciacquatrice</div>
<div class="t" style="left:884.5px;top:890.65px;font-size:14px;line-height:14px;font-weight:400;color:#3a3a3a;letter-spacing:0.12px;">Apr 10, 2023 - 08:49:29</div>
<div class="t" style="left:1119.5px;top:890.65px;font-size:14px;line-height:14px;font-weight:400;color:#3a3a3a;letter-spacing:0.12px;">Apr 10, 2023 - 08:51:10</div>
<div class="t" style="left:1349.5px;top:890.65px;font-size:14px;line-height:14px;font-weight:400;color:#3a3a3a;letter-spacing:0.1px;">00:01:41</div>
<div class="t" style="left:1480.5px;top:890.65px;font-size:14px;line-height:14px;font-weight:400;color:#3a3a3a;letter-spacing:0.1px;">MAT1</div>
<div class="t" style="left:1607.8px;top:890.65px;font-size:14px;line-height:14px;font-weight:400;color:#3a3a3a;letter-spacing:0px;">176406</div>
<div class="abs" style="left:1799px;top:875.50px;width:45px;height:45px;border-radius:50%;background:#efefef"></div>
<svg class="abs" style="left:1800px;top:875.50px" width="45" height="45" viewBox="1800 532.9 45 45"><g fill="none" stroke="#000" stroke-width="2.2"><path d="M1822 546 H1815 Q1813.7 546 1813.7 547.3 V560.8 Q1813.7 562.1 1815 562.1 H1828.5 Q1829.8 562.1 1829.8 560.8 V554"/><path d="M1823.9 546 H1829.8 V552.6"/><path d="M1819.3 556.5 L1829 546.8" stroke-linecap="round"/></g></svg>
<div class="abs" style="left:323px;top:944.50px;width:44px;height:44px;border-radius:50%;background:#d4dce0"></div>
<svg class="abs" style="left:334px;top:954.50px" width="23" height="20" viewBox="0 0 23 20"><path fill="#fff" d="M11.5 0.5 L22.5 19.5 H0.5 Z"/><rect x="10.8" y="8" width="1.4" height="5" fill="#d4dce0"/><rect x="10.8" y="14.5" width="1.4" height="1.4" fill="#d4dce0"/></svg>
<div class="t" style="left:391.6px;top:959.15px;font-size:14px;line-height:14px;font-weight:700;color:#2d2d2d;letter-spacing:0px;">1</div>
<div class="t" style="left:493px;top:958.30px;font-size:15px;line-height:15px;font-weight:700;color:#2d2d2d;letter-spacing:0.25px;">Anomalia protezioni riempitrice</div>
<div class="t" style="left:884.5px;top:959.15px;font-size:14px;line-height:14px;font-weight:400;color:#3a3a3a;letter-spacing:0.12px;">Apr 10, 2023 - 08:44:24</div>
<div class="t" style="left:1119.5px;top:959.15px;font-size:14px;line-height:14px;font-weight:400;color:#3a3a3a;letter-spacing:0.12px;">Apr 10, 2023 - 08:46:10</div>
<div class="t" style="left:1349.5px;top:959.15px;font-size:14px;line-height:14px;font-weight:400;color:#3a3a3a;letter-spacing:0.1px;">00:01:46</div>
<div class="t" style="left:1480.5px;top:959.15px;font-size:14px;line-height:14px;font-weight:400;color:#3a3a3a;letter-spacing:0.1px;">MAT1</div>
<div class="t" style="left:1607.8px;top:959.15px;font-size:14px;line-height:14px;font-weight:400;color:#3a3a3a;letter-spacing:0px;">133452</div>
<div class="abs" style="left:1799px;top:944.00px;width:45px;height:45px;border-radius:50%;background:#efefef"></div>
<svg class="abs" style="left:1800px;top:944.00px" width="45" height="45" viewBox="1800 532.9 45 45"><g fill="none" stroke="#000" stroke-width="2.2"><path d="M1822 546 H1815 Q1813.7 546 1813.7 547.3 V560.8 Q1813.7 562.1 1815 562.1 H1828.5 Q1829.8 562.1 1829.8 560.8 V554"/><path d="M1823.9 546 H1829.8 V552.6"/><path d="M1819.3 556.5 L1829 546.8" stroke-linecap="round"/></g></svg>
<div class="abs" style="left:323px;top:1013.00px;width:44px;height:44px;border-radius:50%;background:#d4dce0"></div>
<svg class="abs" style="left:334px;top:1023.00px" width="23" height="20" viewBox="0 0 23 20"><path fill="#fff" d="M11.5 0.5 L22.5 19.5 H0.5 Z"/><rect x="10.8" y="8" width="1.4" height="5" fill="#d4dce0"/><rect x="10.8" y="14.5" width="1.4" height="1.4" fill="#d4dce0"/></svg>
<div class="t" style="left:391.6px;top:1027.65px;font-size:14px;line-height:14px;font-weight:700;color:#2d2d2d;letter-spacing:0px;">2</div>
<div class="t" style="left:493px;top:1026.80px;font-size:15px;line-height:15px;font-weight:700;color:#2d2d2d;letter-spacing:0.25px;">Anomalia motore giallo sciacquatrice</div>
<div class="t" style="left:884.5px;top:1027.65px;font-size:14px;line-height:14px;font-weight:400;color:#3a3a3a;letter-spacing:0.12px;">Apr 10, 2023 - 08:29:26</div>
<div class="t" style="left:1119.5px;top:1027.65px;font-size:14px;line-height:14px;font-weight:400;color:#3a3a3a;letter-spacing:0.12px;">Apr 10, 2023 - 08:31:10</div>
<div class="t" style="left:1349.5px;top:1027.65px;font-size:14px;line-height:14px;font-weight:400;color:#3a3a3a;letter-spacing:0.1px;">00:01:44</div>
<div class="t" style="left:1480.5px;top:1027.65px;font-size:14px;line-height:14px;font-weight:400;color:#3a3a3a;letter-spacing:0.1px;">MAT3</div>
<div class="t" style="left:1607.8px;top:1027.65px;font-size:14px;line-height:14px;font-weight:400;color:#3a3a3a;letter-spacing:0px;">176406</div>
<div class="abs" style="left:1799px;top:1012.50px;width:45px;height:45px;border-radius:50%;background:#efefef"></div>
<svg class="abs" style="left:1800px;top:1012.50px" width="45" height="45" viewBox="1800 532.9 45 45"><g fill="none" stroke="#000" stroke-width="2.2"><path d="M1822 546 H1815 Q1813.7 546 1813.7 547.3 V560.8 Q1813.7 562.1 1815 562.1 H1828.5 Q1829.8 562.1 1829.8 560.8 V554"/><path d="M1823.9 546 H1829.8 V552.6"/><path d="M1819.3 556.5 L1829 546.8" stroke-linecap="round"/></g></svg>
<div class="abs" style="left:1702px;top:123px;width:192px;height:288px;border-radius:22px;background:#fff;box-shadow:0 5px 18px rgba(40,40,70,0.13);overflow:hidden"><div class="abs" style="left:0;top:47.5px;width:186px;height:46.5px;background:#2a3a93"></div><div class="abs" style="left:186.6px;top:14.7px;width:5.5px;height:157px;border-radius:3px;background:#a8b0f8"></div></div>
<div class="t" style="left:1720.5px;top:138.11px;font-size:17px;line-height:17px;font-weight:400;color:#6b6f77;letter-spacing:0.1px;">Custom</div>
<div class="t" style="left:1720.5px;top:185.11px;font-size:17px;line-height:17px;font-weight:400;color:#fff;letter-spacing:0.1px;">Today</div>
<div class="t" style="left:1720.5px;top:232.31px;font-size:17px;line-height:17px;font-weight:400;color:#6b6f77;letter-spacing:0.1px;">Yesterday</div>
<div class="t" style="left:1720.5px;top:279.61px;font-size:17px;line-height:17px;font-weight:400;color:#6b6f77;letter-spacing:0.1px;">Last 7 days</div>
<div class="t" style="left:1720.5px;top:326.61px;font-size:17px;line-height:17px;font-weight:400;color:#6b6f77;letter-spacing:0.1px;">Last 30 days</div>
<div class="t" style="left:1720.5px;top:373.61px;font-size:17px;line-height:17px;font-weight:400;color:#6b6f77;letter-spacing:0.1px;">Last 90 days</div>
</body></html>
